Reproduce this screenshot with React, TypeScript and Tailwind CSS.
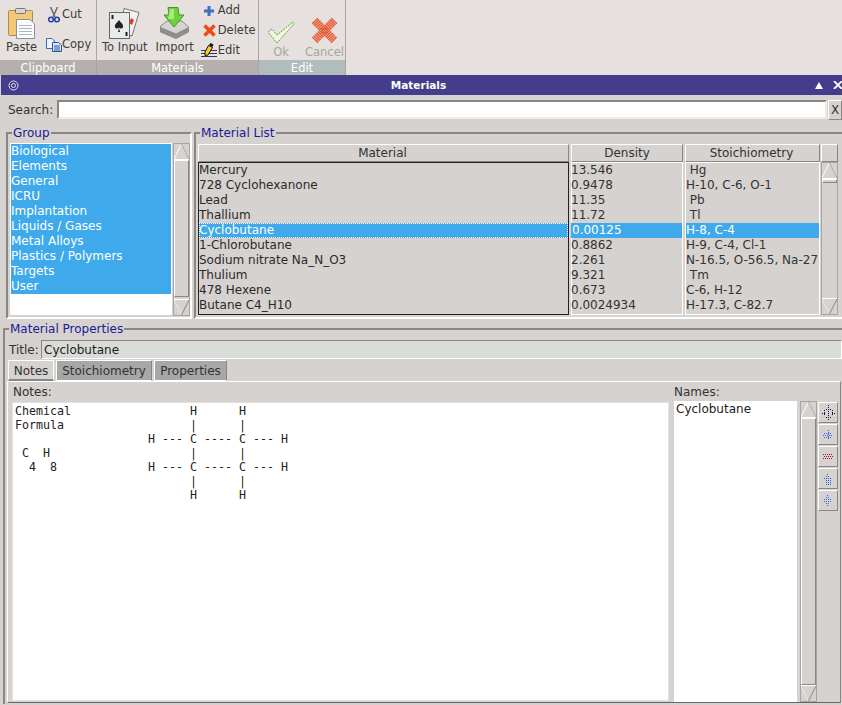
const groups = ["Biological", "Elements", "General", "ICRU", "Implantation", "Liquids / Gases", "Metal Alloys", "Plastics / Polymers", "Targets", "User"];

const materials = [
  ["Mercury", "13.546", " Hg"],
  ["728 Cyclohexanone", "0.9478", "H-10, C-6, O-1"],
  ["Lead", "11.35", " Pb"],
  ["Thallium", "11.72", " Tl"],
  ["Cyclobutane", "0.00125", "H-8, C-4"],
  ["1-Chlorobutane", "0.8862", "H-9, C-4, Cl-1"],
  ["Sodium nitrate Na_N_O3", "2.261", "N-16.5, O-56.5, Na-27"],
  ["Thulium", "9.321", " Tm"],
  ["478 Hexene", "0.673", "C-6, H-12"],
  ["Butane C4_H10", "0.0024934", "H-17.3, C-82.7"],
];

const notes = `Chemical                 H      H
Formula                  |      |
                   H --- C ---- C --- H
 C  H                    |      |
  4  8             H --- C ---- C --- H
                         |      |
                         H      H`;

const raised = "border border-t-white border-l-white border-r-[#8a8684] border-b-[#8a8684]";

const UpArrow = () => (
  <svg width="15" height="16" viewBox="0 0 15 16" className="shrink-0">
    <path d="M0 15 L7.5 0" stroke="#fff" />
    <path d="M7.5 0 L15 15" stroke="#8a8684" strokeDasharray="1 1" />
    <path d="M0 15.5 H15" stroke="#fff" />
  </svg>
);

const DownArrow = () => (
  <svg width="15" height="16" viewBox="0 0 15 16" className="shrink-0">
    <path d="M0 1 L7.5 16" stroke="#fff" strokeDasharray="1 1" />
    <path d="M7.5 16 L15 1" stroke="#8a8684" />
    <path d="M0 .5 H15" stroke="#fff" />
  </svg>
);

const Scrollbar = ({ thumb }: { thumb: string }) => (
  <div className="flex flex-col w-[17px] h-full border border-[#a9a5a3]">
    <UpArrow />
    <div className={`${raised} ${thumb} w-full`} />
    <div className="flex-1" />
    <DownArrow />
  </div>
);

const Frame = ({ label, className, children }: { label: string; className: string; children: React.ReactNode }) => (
  <div className={`relative border-2 border-t-[#8a8684] border-l-[#8a8684] border-r-white border-b-white ${className}`}>
    <span className="absolute left-[4px] top-[-8px] bg-[#d6d2cf] px-px text-[12px] leading-[14px] text-[#1a1a96]">
      {label}
    </span>
    {children}
  </div>
);

const PasteIcon = () => (
  <svg width="27" height="31" viewBox="0 0 27 31">
    <rect x=".5" y="2.5" width="24" height="25" rx="1" fill="#f3c877" stroke="#b08a4e" />
    <rect x="7.5" y=".5" width="10" height="5" rx="1" fill="#d9d6d2" stroke="#777" />
    <path d="M8.5 11.5 H22 L26.5 16 V30.5 H8.5 Z" fill="#fbfbfb" stroke="#8a8f99" />
    <path d="M11 17.5 H24 M11 20.5 H24 M11 23.5 H24 M11 26.5 H24" stroke="#a8b4c8" />
  </svg>
);

const CutIcon = () => (
  <svg width="12" height="16" viewBox="0 0 12 16">
    <path d="M2.5 0 L7 10 M9.5 0 L5 10" stroke="#6c7078" strokeWidth="1.6" />
    <circle cx="3" cy="12.5" r="2.3" fill="none" stroke="#2a3fa8" strokeWidth="1.6" />
    <circle cx="9" cy="12.5" r="2.3" fill="none" stroke="#2a3fa8" strokeWidth="1.6" />
  </svg>
);

const CopyIcon = () => (
  <svg width="16" height="14" viewBox="0 0 16 14">
    <path d="M.5 .5 H6 L8.5 3 V10.5 H.5 Z" fill="#eef2fa" stroke="#3a6ab8" />
    <path d="M6.5 4.5 H12.5 L15.5 7 V13.5 H6.5 Z" fill="#dbe6f8" stroke="#2a55a8" />
    <path d="M8 8 H14 M8 10 H14 M8 12 H14" stroke="#2a55a8" />
  </svg>
);

const CardsIcon = () => (
  <svg width="31" height="31" viewBox="0 0 31 31">
    <path d="M15 .5 L30 4.5 L23 28 L12 25 Z" fill="#f4f2f0" stroke="#777" />
    <path d="M22 10 L25 12 L23 17 L20 15 Z" fill="#e03a2a" />
    <rect x=".5" y="4.5" width="20" height="26" fill="#e9eaea" stroke="#666" />
    <path d="M10 12 C12 15 14.5 16 14 19 C13.5 21 11 21 10 19.5 C9 21 6.5 21 6 19 C5.5 16 8 15 10 12 Z" fill="#222" />
    <path d="M9 24 L10 20 L11 24 Z" fill="#222" />
    <path d="M3.5 7 V11 M17.5 24 V28" stroke="#222" strokeWidth="2" />
  </svg>
);

const ImportIcon = () => (
  <svg width="29" height="32" viewBox="0 0 29 32">
    <path d="M.5 19 L7 14 H22 L28.5 20 V25 L16 31.5 L.5 25 Z" fill="#d4d4d0" stroke="#8a8a86" />
    <path d="M.5 20 L16 26.5 L28.5 20 V25 L16 31.5 L.5 25 Z" fill="#8e8e8a" />
    <path d="M8 .5 H18 L19 8 H24 L14 20 L4 8 H9 Z" fill="#6fd13c" stroke="#3c9a1e" />
    <path d="M10 2 H14 V12 H8 Z" fill="#a8ec7c" />
  </svg>
);

const AddIcon = () => (
  <svg width="10" height="10" viewBox="0 0 10 10">
    <path d="M5 0 V10 M0 5 H10" stroke="#3f6fc4" strokeWidth="3" />
  </svg>
);

const DeleteIcon = () => (
  <svg width="13" height="13" viewBox="0 0 13 13">
    <path d="M1.5 1.5 L11.5 11.5 M11.5 1.5 L1.5 11.5" stroke="#ee4c14" strokeWidth="3.6" />
  </svg>
);

const EditIcon = () => (
  <svg width="17" height="15" viewBox="0 0 17 15">
    <path d="M0 7.5 H16 M0 10.5 H16 M0 13.5 H16" stroke="#33336a" />
    <path d="M4 9 L7.5 2.5 L11.5 4.5 L7 12 L4 12.5 Z" fill="#f7d318" stroke="#111" />
    <path d="M8 2 L9.5 0 L12.5 1.5 L11.5 4 Z" fill="#111" />
  </svg>
);

const OkIcon = () => (
  <svg width="28" height="23" viewBox="0 0 28 23">
    <path d="M1 11 L5 8 L10 14 L26 1 L27 3 L10 22 Z" fill="#eef7de" stroke="#55a845" strokeDasharray="2 1" />
  </svg>
);

const CancelIcon = () => (
  <svg width="27" height="27" viewBox="0 0 27 27">
    <path d="M3.5 3.5 L23.5 23.5 M23.5 3.5 L3.5 23.5" stroke="#e9582f" strokeWidth="8" strokeDasharray="1.4 .5" />
  </svg>
);

const MoveIcons = [
  <svg key="a" width="16" height="16" viewBox="0 0 16 16" fill="none" stroke="#141450" strokeDasharray="1 1" shapeRendering="crispEdges">
    <path d="M8.5 0 V16 M5.5 4 H11.5 M1.5 8 H5 M12 8 H15 M4.5 5 V11 M12.5 5 V11 M5.5 12.5 H11.5" />
  </svg>,
  <svg key="b" width="10" height="10" viewBox="0 0 10 10" fill="none" stroke="#3f63e0" strokeDasharray="1 1" shapeRendering="crispEdges">
    <path d="M5.5 0 V10 M1 3.5 H9 M0 5.5 H10 M1 7.5 H9" />
  </svg>,
  <svg key="c" width="10" height="5" viewBox="0 0 10 5" fill="none" stroke="#a01028" strokeDasharray="1 1" shapeRendering="crispEdges">
    <path d="M0 .5 H10 M1 2.5 H10 M0 4.5 H10" />
  </svg>,
  <svg key="d" width="10" height="12" viewBox="0 0 10 12" fill="none" stroke="#2f55d8" strokeDasharray="1 1" shapeRendering="crispEdges">
    <path d="M4 1.5 H6 M3 3.5 H7 M1 5.5 H9 M3 7.5 H8 M3 9.5 H8 M3 11.5 H8" />
  </svg>,
  <svg key="e" width="10" height="12" viewBox="0 0 10 12" fill="none" stroke="#3f63e0" strokeDasharray="1 1" shapeRendering="crispEdges">
    <path d="M4 .5 H6 M3 2.5 H7 M1 4.5 H9 M1 6.5 H9 M3 8.5 H7 M4 10.5 H6" />
  </svg>,
];

const BigTool = ({ icon, label, muted }: { icon: React.ReactNode; label: string; muted?: boolean }) => (
  <div className="flex flex-col items-center">
    <div className="h-[39px] flex items-end justify-center">{icon}</div>
    <span className={`mt-[1px] leading-[14px] ${muted ? "text-[#a5a5a3]" : "text-[#3c3c3c]"}`}>{label}</span>
  </div>
);

const SmallTool = ({ icon, label }: { icon: React.ReactNode; label: string }) => (
  <div className="flex items-center h-[20px] text-[#3c3c3c]">
    <div className="w-[17px] flex justify-center">{icon}</div>
    <span>{label}</span>
  </div>
);

const RibbonGroup = ({ title, width, labelBg, children }: { title: string; width: string; labelBg: string; children: React.ReactNode }) => (
  <div className={`flex flex-col ${width} border-r border-[#a9a5a3]`}>
    <div className="h-[60px] flex">{children}</div>
    <div className={`h-[15px] ${labelBg} text-white text-center text-[11.5px] leading-[16px]`}>{title}</div>
  </div>
);

const App = () => {
  return (
    <div
      className="w-[842px] h-[705px] overflow-hidden bg-[#d6d2cf] text-[12px] text-[#333]"
      style={{ fontFamily: '"DejaVu Sans", sans-serif' }}
    >
      {/* Ribbon */}
      <div className="flex h-[75px] bg-[#e6e1de] text-[11.5px]">
        <RibbonGroup title="Clipboard" width="w-[97px]" labelBg="bg-[#b5b0ae]">
          <div className="pl-[6px] pr-[8px]">
            <BigTool icon={<PasteIcon />} label="Paste" />
          </div>
          <div className="flex flex-col pt-[5px] gap-[10px]">
            <SmallTool icon={<CutIcon />} label="Cut" />
            <SmallTool icon={<CopyIcon />} label="Copy" />
          </div>
        </RibbonGroup>
        <RibbonGroup title="Materials" width="w-[162px]" labelBg="bg-[#b5b0ae]">
          <div className="pl-[5px] pr-[8px]">
            <BigTool icon={<CardsIcon />} label="To Input" />
          </div>
          <div className="pr-[7px]">
            <BigTool icon={<ImportIcon />} label="Import" />
          </div>
          <div className="flex flex-col pt-[1px]">
            <SmallTool icon={<AddIcon />} label="Add" />
            <SmallTool icon={<DeleteIcon />} label="Delete" />
            <SmallTool icon={<EditIcon />} label="Edit" />
          </div>
        </RibbonGroup>
        <RibbonGroup title="Edit" width="w-[87px]" labelBg="bg-[#b1bcbd]">
          <div className="flex gap-[10px] pl-[8px] pt-[5px]">
            <BigTool icon={<OkIcon />} label="Ok" muted />
            <BigTool icon={<CancelIcon />} label="Cancel" muted />
          </div>
        </RibbonGroup>
      </div>

      {/* Title bar */}
      <div className="flex items-center justify-between h-[20px] ml-px bg-[#443d8b] text-white pl-[7px]">
        <svg width="11" height="11" viewBox="0 0 11 11" fill="none" stroke="#dfe0f0">
          <circle cx="5.5" cy="5.5" r="4.5" />
          <circle cx="5.5" cy="5.5" r="2" />
        </svg>
        <span className="font-bold text-[10.5px] leading-[21px] ml-[3px]">Materials</span>
        <div className="flex items-center gap-[10px] w-[27px]">
          <svg width="8" height="7" viewBox="0 0 8 7" fill="#fff">
            <path d="M4 0 L8 7 H0 Z" />
          </svg>
          <svg width="9" height="8" viewBox="0 0 9 8" stroke="#fff" strokeWidth="1.8">
            <path d="M1 0 L9 8 M9 0 L1 8" />
          </svg>
        </div>
      </div>

      {/* Search */}
      <div className="flex items-center h-[26px] pl-[8px] pt-[3px]">
        <span className="w-[49px]">Search:</span>
        <div className="h-[19px] w-[770px] bg-white border-2 border-t-[#8a8684] border-l-[#8a8684] border-r-[#eeeae8] border-b-[#eeeae8]" />
        <div className={`ml-[1px] h-[20px] w-[14px] flex items-center justify-center ${raised}`}>X</div>
      </div>

      {/* Group + material list */}
      <div className="flex mt-[11px] h-[187px]">
        <Frame label="Group" className="ml-[6px] w-[186px]">
          <div className="flex h-full pl-[2px] pt-[9px] pb-[1px] gap-[1px]">
            <div className="w-[162px] h-[172px] bg-white border border-white">
              <div className="bg-[#3faaeb] text-white leading-[15px] h-[150px]">
                {groups.map((g) => (
                  <div key={g}>{g}</div>
                ))}
              </div>
            </div>
            <Scrollbar thumb="h-[137px]" />
          </div>
        </Frame>
        <Frame label="Material List" className="ml-[2px] w-[648px] border-r-0">
          <div className="flex h-full pl-[2px] pt-[10px] pb-[2px] gap-[2px]">
            <div className="flex flex-col w-[371px]">
              <div className={`h-[18px] text-center pt-px pr-[2px] leading-[15px] ${raised}`}>Material</div>
              <div className="flex-1 border border-[#222] leading-[15px] text-[#2a2a2a]">
                {materials.map((m, i) => (
                  <div key={m[0]} className={i === 4 ? "bg-[#3faaeb] text-white outline-1 -outline-offset-1 outline-dotted outline-white" : ""}>
                    {m[0]}
                  </div>
                ))}
              </div>
            </div>
            <div className="flex flex-col w-[112px]">
              <div className={`h-[18px] text-center pt-px leading-[15px] ${raised}`}>Density</div>
              <div className="flex-1 border border-white leading-[15px]">
                {materials.map((m, i) => (
                  <div key={m[0]} className={`-ml-px ${i === 4 ? "bg-[#3faaeb] text-white pl-px" : ""}`}>
                    {m[1]}
                  </div>
                ))}
              </div>
            </div>
            <div className="flex flex-col w-[135px]">
              <div className={`h-[18px] text-center pt-px pr-[2px] leading-[15px] ${raised}`}>Stoichiometry</div>
              <div className="flex-1 border border-white leading-[15px]">
                {materials.map((m, i) => (
                  <div key={m[0]} className={`whitespace-pre overflow-hidden ${i === 4 ? "bg-[#3faaeb] text-white" : ""}`}>
                    {m[2]}
                  </div>
                ))}
              </div>
            </div>
            <div className="flex flex-col w-[17px] -ml-[1px]">
              <div className={`h-[18px] ${raised}`} />
              <div className="flex-1 min-h-0">
                <Scrollbar thumb="h-[4px]" />
              </div>
            </div>
          </div>
        </Frame>
      </div>

      {/* Material properties */}
      <Frame label="Material Properties" className="ml-[3px] mt-[9px] h-[376px] border-r-0 border-b-0">
        <div className="flex items-center h-[20px] mt-[9px] pl-[4px]">
          <span className="w-[32px] pt-px">Title:</span>
          <div className="flex-1 h-[19px] bg-[#d9dbd8] border border-t-[#8a8684] border-l-[#8a8684] border-r-white border-b-white pl-[2px] pt-px leading-[16px] text-[#222]">
            Cyclobutane
          </div>
        </div>
        <div className="flex gap-[2px] h-[21px] pl-[3px] mt-[1px]">
          <div className="w-[46px] text-center pt-[2px] border border-white border-b-2 border-b-[#8a8684] leading-[16px]">Notes</div>
          <div className="w-[96px] text-center pt-[2px] bg-[#a5a8a6] border border-white border-r-[#8a8684] leading-[16px]">Stoichiometry</div>
          <div className="w-[73px] text-center pt-[2px] bg-[#a5a8a6] border border-white border-r-[#8a8684] leading-[16px]">Properties</div>
        </div>
        <div className="flex ml-[2px] mr-[1px] h-[322px] overflow-hidden border border-t-white border-l-white border-r-[#8a8684] border-b-[#6a6664] pl-[4px] pt-[2px]">
          <div className="flex flex-col w-[657px]">
            <div className="pt-px leading-[15px] pl-px h-[18px]">Notes:</div>
            <pre
              className="h-[299px] bg-white border border-[#e4e1df] pl-[2px] pt-[1px] text-[11.63px] leading-[14px] text-[#222]"
              style={{ fontFamily: '"DejaVu Sans Mono", monospace' }}
            >
              {notes}
            </pre>
          </div>
          <div className="flex flex-col w-[123px] ml-[5px]">
            <div className="pt-px leading-[15px] h-[17px]">Names:</div>
            <div className="h-[301px] bg-white pl-[2px] pt-px leading-[15px] text-[#222]">Cyclobutane</div>
          </div>
          <div className="ml-[3px] mt-[17px] h-[301px]">
            <Scrollbar thumb="h-[267px]" />
          </div>
          <div className="flex flex-col gap-[1px] ml-[1px] mt-[18px]">
            {MoveIcons.map((icon) => (
              <div key={icon.key} className={`w-[20px] h-[21px] flex items-center justify-center ${raised}`}>
                {icon}
              </div>
            ))}
          </div>
        </div>
      </Frame>
    </div>
  );
};

export default App;
